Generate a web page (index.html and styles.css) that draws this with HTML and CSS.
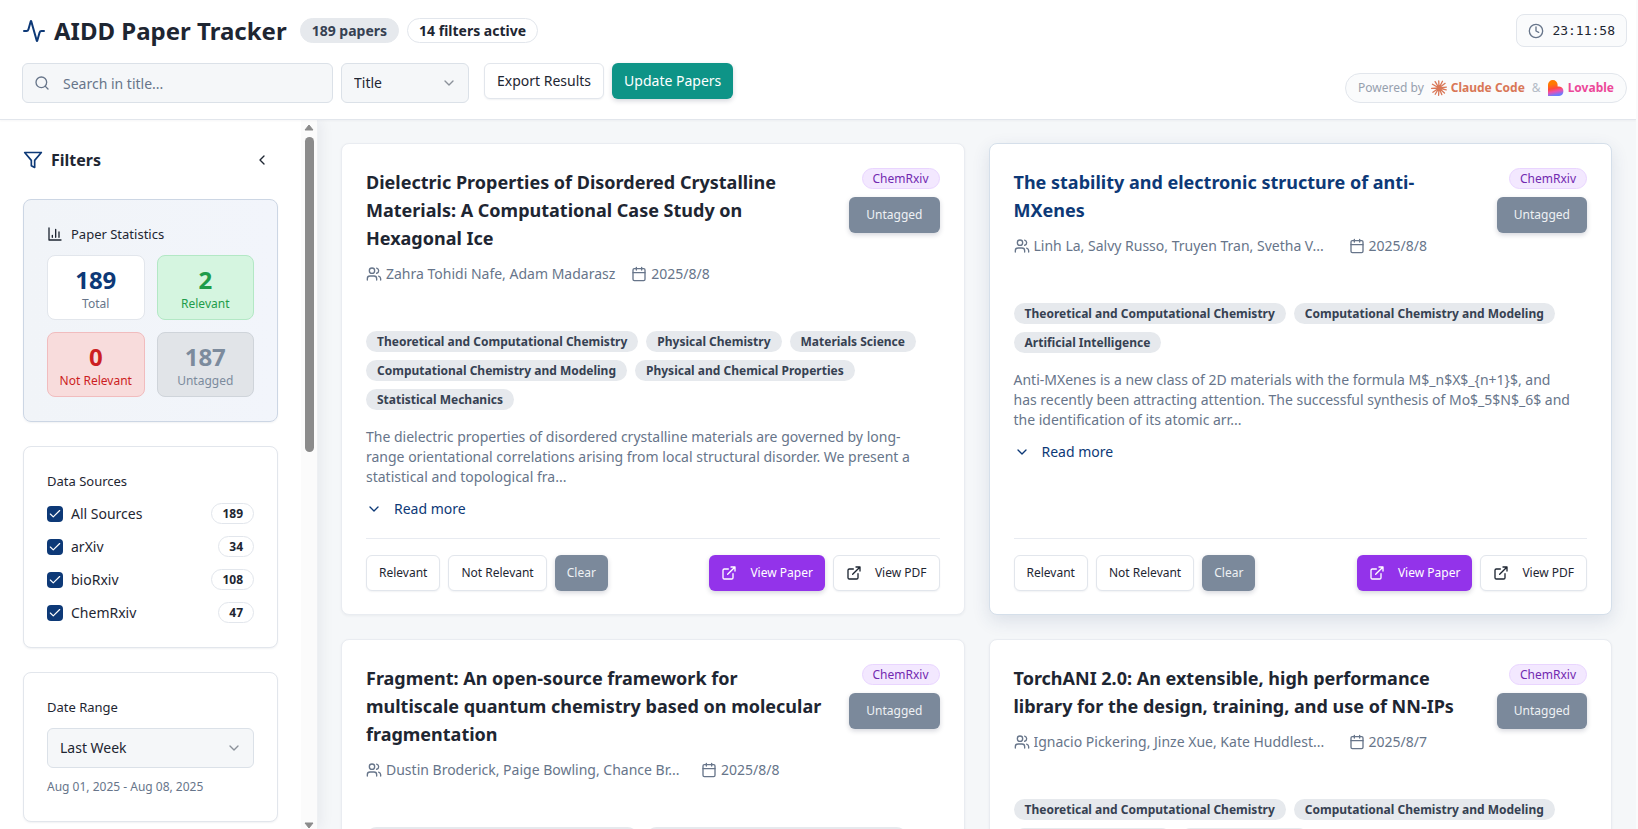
FILE: index.html
```html
<!DOCTYPE html>
<html lang="en">
<head>
<meta charset="utf-8">
<title>AIDD Paper Tracker</title>
<link rel="stylesheet" href="styles.css">
</head>
<body>
<svg class="sprite" aria-hidden="true">
  <symbol id="i-activity" viewBox="0 0 24 24"><path d="M22 12h-2.48a2 2 0 0 0-1.93 1.46l-2.35 8.36a.25.25 0 0 1-.48 0L9.24 2.18a.25.25 0 0 0-.48 0l-2.35 8.36A2 2 0 0 1 4.49 12H2"/></symbol>
  <symbol id="i-search" viewBox="0 0 24 24"><circle cx="11" cy="11" r="8"/><path d="m21 21-4.3-4.3"/></symbol>
  <symbol id="i-clock" viewBox="0 0 24 24"><circle cx="12" cy="12" r="10"/><path d="M12 6v6l4 2"/></symbol>
  <symbol id="i-down" viewBox="0 0 24 24"><path d="m6 9 6 6 6-6"/></symbol>
  <symbol id="i-left" viewBox="0 0 24 24"><path d="m15 18-6-6 6-6"/></symbol>
  <symbol id="i-check" viewBox="0 0 24 24"><path d="M20 6 9 17l-5-5"/></symbol>
  <symbol id="i-filter" viewBox="0 0 24 24"><path d="M22 3H2l8 9.46V19l4 2v-8.54L22 3z"/></symbol>
  <symbol id="i-chart" viewBox="0 0 24 24"><path d="M3 3v18h18M18 17V9M13 17V5M8 17v-3"/></symbol>
  <symbol id="i-users" viewBox="0 0 24 24"><path d="M16 21v-2a4 4 0 0 0-4-4H6a4 4 0 0 0-4 4v2"/><circle cx="9" cy="7" r="4"/><path d="M22 21v-2a4 4 0 0 0-3-3.87M16 3.13a4 4 0 0 1 0 7.75"/></symbol>
  <symbol id="i-calendar" viewBox="0 0 24 24"><rect x="3" y="4" width="18" height="18" rx="2"/><path d="M8 2v4M16 2v4M3 10h18"/></symbol>
  <symbol id="i-external" viewBox="0 0 24 24"><path d="M15 3h6v6M10 14 21 3M18 13v6a2 2 0 0 1-2 2H5a2 2 0 0 1-2-2V8a2 2 0 0 1 2-2h6"/></symbol>
</svg>
<div class="app">
  <header class="header">
    <div class="header-row">
      <div class="brand">
        <svg class="icon icon-lg primary"><use href="#i-activity"/></svg>
        <h1>AIDD Paper Tracker</h1>
        <span class="count count-solid">189 papers</span>
        <span class="count">14 filters active</span>
      </div>
      <div class="clock"><svg class="icon"><use href="#i-clock"/></svg><time>23:11:58</time></div>
    </div>
    <div class="header-row tools">
      <div class="search">
        <svg class="icon"><use href="#i-search"/></svg>
        <input type="text" placeholder="Search in title..." aria-label="Search in title">
      </div>
      <div class="select search-field">
        <select aria-label="Search field"><option>Title</option></select>
        <svg class="icon"><use href="#i-down"/></svg>
      </div>
      <div class="actions">
        <button class="btn btn-md">Export Results</button>
        <button class="btn btn-md btn-teal">Update Papers</button>
      </div>
      <div class="powered">
        <span>Powered by</span>
        <a class="claude" href="#"><svg viewBox="0 0 24 24"><g stroke="#d97757" stroke-width="2" stroke-linecap="round"><path d="M12 12 11.600 1.200M12 12 17.200 1.900M12 12 21.200 5M12 12 23 10.600M12 12 22.800 14.800M12 12 20.200 19.400M12 12 16.300 22M12 12 11.400 22.900M12 12 6.300 21.400M12 12 2.800 18.300M12 12 1 12.600M12 12 2.200 6.400M12 12 6.200 2.500"/></g></svg>Claude Code</a>
        <span class="amp">&amp;</span>
        <a class="lovable" href="#"><svg viewBox="0 0 24 24"><defs><linearGradient id="lv" x1="8" y1="2" x2="13" y2="25" gradientUnits="userSpaceOnUse"><stop offset="0.150" stop-color="#ff7a00"/><stop offset="0.450" stop-color="#ff4a3a"/><stop offset="0.650" stop-color="#ee4fae"/><stop offset="0.900" stop-color="#6a7bff"/></linearGradient></defs><path fill="url(#lv)" d="M7.200 0a7.200 7.200 0 0 1 7.200 7.200v2.700h2.400a7.100 7.100 0 0 1 0 14.100H0V7.200A7.200 7.200 0 0 1 7.200 0z"/></svg>Lovable</a>
      </div>
    </div>
  </header>

  <div class="body">
    <aside class="sidebar">
      <div class="sidebar-content">
        <div class="sidebar-head">
          <svg class="icon icon-filter primary"><use href="#i-filter"/></svg>
          <h2>Filters</h2>
          <button class="collapse" aria-label="Collapse filters"><svg class="icon"><use href="#i-left"/></svg></button>
        </div>
        <section class="panel panel-stats">
          <h3><svg class="icon"><use href="#i-chart"/></svg>Paper Statistics</h3>
          <div class="stats">
            <div class="stat total"><strong>189</strong><span>Total</span></div>
            <div class="stat yes"><strong>2</strong><span>Relevant</span></div>
            <div class="stat no"><strong>0</strong><span>Not Relevant</span></div>
            <div class="stat none"><strong>187</strong><span>Untagged</span></div>
          </div>
        </section>
        <section class="panel">
          <h3>Data Sources</h3>
          <div class="sources">
            <div class="source"><span class="box"><input type="checkbox" id="s-all" checked><svg class="icon"><use href="#i-check"/></svg></span><label for="s-all">All Sources</label><span class="num">189</span></div>
            <div class="source"><span class="box"><input type="checkbox" id="s-arxiv" checked><svg class="icon"><use href="#i-check"/></svg></span><label for="s-arxiv">arXiv</label><span class="num">34</span></div>
            <div class="source"><span class="box"><input type="checkbox" id="s-bio" checked><svg class="icon"><use href="#i-check"/></svg></span><label for="s-bio">bioRxiv</label><span class="num">108</span></div>
            <div class="source"><span class="box"><input type="checkbox" id="s-chem" checked><svg class="icon"><use href="#i-check"/></svg></span><label for="s-chem">ChemRxiv</label><span class="num">47</span></div>
          </div>
        </section>
        <section class="panel">
          <h3><label for="range">Date Range</label></h3>
          <div class="select">
            <select id="range"><option>Last Week</option></select>
            <svg class="icon"><use href="#i-down"/></svg>
          </div>
          <p class="range-note">Aug 01, 2025 - Aug 08, 2025</p>
        </section>
      </div>
      <div class="scrollbar" aria-hidden="true">
        <svg class="arrow" viewBox="0 0 10 7"><path d="M5 1 9 6H1z"/></svg>
        <div class="track"><div class="thumb"></div></div>
        <svg class="arrow" viewBox="0 0 10 7"><path d="M5 6 1 1h8z"/></svg>
      </div>
    </aside>

    <main class="papers">
      <article class="card">
        <div class="card-head">
          <div class="card-info">
            <h2>Dielectric Properties of Disordered Crystalline Materials: A Computational Case Study on Hexagonal Ice</h2>
            <div class="meta">
              <svg class="icon"><use href="#i-users"/></svg><span>Zahra Tohidi Nafe, Adam Madarasz</span>
              <svg class="icon date-icon"><use href="#i-calendar"/></svg><time>2025/8/8</time>
            </div>
          </div>
          <div class="card-status"><span class="origin">ChemRxiv</span><button class="btn btn-gray btn-tag">Untagged</button></div>
        </div>
        <div class="tags"><span>Theoretical and Computational Chemistry</span><span>Physical Chemistry</span><span>Materials Science</span><span>Computational Chemistry and Modeling</span><span>Physical and Chemical Properties</span><span>Statistical Mechanics</span></div>
        <p class="abstract">The dielectric properties of disordered crystalline materials are governed by long-range orientational correlations arising from local structural disorder. We present a statistical and topological fra...</p>
        <button class="more"><svg class="icon"><use href="#i-down"/></svg>Read more</button>
        <div class="card-foot">
          <button class="btn">Relevant</button><button class="btn">Not Relevant</button><button class="btn btn-gray">Clear</button>
          <a class="btn btn-link btn-purple" href="#"><svg class="icon"><use href="#i-external"/></svg>View Paper</a>
          <a class="btn btn-link" href="#"><svg class="icon"><use href="#i-external"/></svg>View PDF</a>
        </div>
      </article>

      <article class="card card-active">
        <div class="card-head">
          <div class="card-info">
            <h2>The stability and electronic structure of anti-MXenes</h2>
            <div class="meta">
              <svg class="icon"><use href="#i-users"/></svg><span class="long">Linh La, Salvy Russo, Truyen Tran, Svetha V...</span>
              <svg class="icon date-icon"><use href="#i-calendar"/></svg><time>2025/8/8</time>
            </div>
          </div>
          <div class="card-status"><span class="origin">ChemRxiv</span><button class="btn btn-gray btn-tag">Untagged</button></div>
        </div>
        <div class="tags"><span>Theoretical and Computational Chemistry</span><span>Computational Chemistry and Modeling</span><span>Artificial Intelligence</span></div>
        <p class="abstract">Anti-MXenes is a new class of 2D materials with the formula M$_n$X$_{n+1}$, and has recently been attracting attention. The successful synthesis of Mo$_5$N$_6$ and the identification of its atomic arr...</p>
        <button class="more"><svg class="icon"><use href="#i-down"/></svg>Read more</button>
        <div class="card-foot">
          <button class="btn">Relevant</button><button class="btn">Not Relevant</button><button class="btn btn-gray">Clear</button>
          <a class="btn btn-link btn-purple" href="#"><svg class="icon"><use href="#i-external"/></svg>View Paper</a>
          <a class="btn btn-link" href="#"><svg class="icon"><use href="#i-external"/></svg>View PDF</a>
        </div>
      </article>

      <article class="card">
        <div class="card-head">
          <div class="card-info">
            <h2>Fragment: An open-source framework for multiscale quantum chemistry based on molecular fragmentation</h2>
            <div class="meta">
              <svg class="icon"><use href="#i-users"/></svg><span class="long">Dustin Broderick, Paige Bowling, Chance Br...</span>
              <svg class="icon date-icon"><use href="#i-calendar"/></svg><time>2025/8/8</time>
            </div>
          </div>
          <div class="card-status"><span class="origin">ChemRxiv</span><button class="btn btn-gray btn-tag">Untagged</button></div>
        </div>
        <div class="tags"><span>Theoretical and Computational Chemistry</span><span>Computational Chemistry and Modeling</span></div>
      </article>

      <article class="card">
        <div class="card-head">
          <div class="card-info">
            <h2>TorchANI 2.0: An extensible, high performance library for the design, training, and use of NN-IPs</h2>
            <div class="meta">
              <svg class="icon"><use href="#i-users"/></svg><span class="long">Ignacio Pickering, Jinze Xue, Kate Huddlest...</span>
              <svg class="icon date-icon"><use href="#i-calendar"/></svg><time>2025/8/7</time>
            </div>
          </div>
          <div class="card-status"><span class="origin">ChemRxiv</span><button class="btn btn-gray btn-tag">Untagged</button></div>
        </div>
        <div class="tags"><span>Theoretical and Computational Chemistry</span><span>Computational Chemistry and Modeling</span><span>Computational Physics</span><span>Machine Learning</span></div>
      </article>
    </main>
  </div>
</div>
</body>
</html>
```
FILE: styles.css
```css
:root {
  --primary: #0d3977;
  --text: #1e2632;
  --muted: #67758a;
  --border: #e2e6ec;
  --field: #f5f7f9;
  --gray: #7b899b;
}
* { box-sizing: border-box; }
body {
  margin: 0;
  background: #fafbfc;
  color: var(--text);
  font: 14px/20px "Noto Sans", "Open Sans", sans-serif;
}
h1, h2, h3, p { margin: 0; }
button, input, select { font: inherit; color: inherit; }
a { text-decoration: none; color: inherit; }
.sprite { display: none; }
.icon {
  width: 16px;
  height: 16px;
  flex: none;
  fill: none;
  stroke: currentColor;
  stroke-width: 2;
  stroke-linecap: round;
  stroke-linejoin: round;
}
.icon-lg { width: 24px; height: 24px; }
.primary { color: var(--primary); }

.app {
  display: flex;
  flex-direction: column;
  height: 100vh;
  margin-right: 2px;
  overflow: hidden;
}

/* Header */
.header {
  position: relative;
  z-index: 2;
  display: flex;
  flex-direction: column;
  gap: 16px;
  padding: 14px 9px 16px 22px;
  background: #fff;
  border-bottom: 1px solid var(--border);
  box-shadow: 0 1px 2px rgba(20, 30, 60, .04);
}
.header-row { display: flex; justify-content: space-between; align-items: center; }
.brand { display: flex; align-items: center; gap: 8px; }
.brand h1 { margin-right: 5px; font-size: 24px; line-height: 32px; font-weight: 700; }
.count {
  height: 25px;
  padding: 0 11px;
  border: 1px solid var(--border);
  border-radius: 13px;
  font-weight: 700;
  line-height: 23px;
}
.count-solid { background: #e6e9ed; border-color: #e6e9ed; color: #364152; }
.clock {
  display: flex;
  align-items: center;
  gap: 8px;
  height: 33px;
  padding: 0 11px;
  border: 1px solid var(--border);
  border-radius: 8px;
  background: #fafbfc;
  font: 13px/20px "DejaVu Sans Mono", monospace;
}
.clock .icon { color: var(--muted); }
.tools { justify-content: flex-start; align-items: flex-start; }
.search { position: relative; width: 311px; margin-right: 8px; }
.search .icon { position: absolute; left: 12px; top: 12px; color: var(--muted); }
.search input {
  width: 100%;
  height: 40px;
  padding: 0 12px 0 40px;
  border: 1px solid #dbe1e8;
  border-radius: 6px;
  background: var(--field);
}
.search input::placeholder { color: var(--muted); opacity: 1; }
.select { position: relative; }
.select select {
  display: block;
  width: 100%;
  height: 40px;
  padding: 0 36px 0 12px;
  appearance: none;
  border: 1px solid #dbe1e8;
  border-radius: 6px;
  background: var(--field);
}
.select .icon { position: absolute; right: 12px; top: 12px; color: #8b919a; pointer-events: none; }
.search-field { width: 128px; }
.actions { display: flex; gap: 8px; margin-left: 15px; }
.powered {
  display: flex;
  align-items: center;
  align-self: flex-end;
  gap: 7px;
  height: 30px;
  margin-left: auto;
  padding: 0 12px;
  border: 1px solid var(--border);
  border-radius: 15px;
  background: #fafbfc;
  color: #96a0ae;
  font-size: 12px;
  line-height: 16px;
}
.powered a { display: flex; align-items: center; gap: 4px; font-weight: 700; }
.powered svg { width: 16px; height: 16px; }
.claude { color: #d97757; }
.lovable { color: #ec4899; }
.amp { color: #b4bcc7; }

/* Buttons */
.btn {
  display: inline-flex;
  align-items: center;
  justify-content: center;
  height: 36px;
  padding: 0 12px;
  border: 1px solid var(--border);
  border-radius: 6px;
  background: #fff;
  box-shadow: 0 1px 2px rgba(20, 30, 60, .06);
  font-size: 12px;
  line-height: 16px;
  white-space: nowrap;
}
.btn-md { font-size: 14px; }
.btn-teal, .btn-gray, .btn-purple {
  border: 0;
  color: #fff;
  box-shadow: 0 2px 5px rgba(20, 30, 60, .18);
}
.btn-teal { background-color: #0e9487; }
.btn-gray { background-color: var(--gray); color: #eef1f4; }
.btn-purple { background-color: #9333ea; }
.btn-tag { padding: 0 17px; }
.btn-link { gap: 13px; }

/* Sidebar */
.body { display: flex; flex: 1; min-height: 0; }
.sidebar {
  position: relative;
  z-index: 1;
  display: flex;
  flex: none;
  width: 318px;
  background: #fff;
  border-right: 1px solid #eef0f3;
  box-shadow: 2px 0 14px rgba(20, 30, 60, .07);
}
.sidebar-content {
  display: flex;
  flex: 1;
  flex-direction: column;
  gap: 24px;
  padding: 24px 23px 0;
  overflow: hidden;
}
.sidebar-head { display: flex; align-items: center; gap: 8px; height: 31px; }
.sidebar-head h2 { font-size: 16px; line-height: 24px; font-weight: 700; }
.icon-filter { width: 20px; height: 20px; }
.collapse {
  display: flex;
  margin-left: auto;
  padding: 8px;
  border: 0;
  background: none;
}
.panel {
  padding: 24px 23px;
  border: 1px solid var(--border);
  border-radius: 8px;
  background: #fff;
  box-shadow: 0 1px 2px rgba(20, 30, 60, .06);
}
.panel-stats { background: linear-gradient(90deg, #f1f4f8, #f2f5fb); border-color: #ccd6e4; }
.panel h3 {
  display: flex;
  align-items: center;
  gap: 8px;
  margin-bottom: 11px;
  font-size: 13px;
  font-weight: 400;
}
.stats { display: grid; grid-template-columns: 1fr 1fr; gap: 12px; }
.stat {
  display: flex;
  flex-direction: column;
  height: 65px;
  padding-top: 8px;
  border: 1px solid;
  border-radius: 8px;
  text-align: center;
}
.stat strong { font-size: 24px; line-height: 32px; }
.stat span { font-size: 12px; line-height: 16px; white-space: nowrap; }
.total { background: #fff; border-color: var(--border); color: var(--primary); }
.total span { color: var(--muted); }
.yes { background: #d5f5e0; border-color: #b3e8c5; color: #1f9c4a; }
.no { background: #f8dcdc; border-color: #f1bcbe; color: #cc1e22; }
.none { background: #e1e4e8; border-color: #cfd4da; color: #7c8b9d; }
.sources { display: flex; flex-direction: column; gap: 12px; padding-top: 1px; }
.source { display: flex; align-items: center; gap: 8px; height: 21px; }
.box { position: relative; width: 16px; height: 16px; }
.box input {
  display: block;
  width: 16px;
  height: 16px;
  margin: 0;
  appearance: none;
  border-radius: 4px;
  background: var(--primary);
}
.box .icon { position: absolute; left: 1px; top: 1px; width: 14px; height: 14px; color: #fff; pointer-events: none; }
.num {
  margin-left: auto;
  padding: 0 10px;
  border: 1px solid var(--border);
  border-radius: 11px;
  font-size: 12px;
  line-height: 19px;
  font-weight: 700;
}
.range-note { margin-top: 9px; color: var(--muted); font-size: 12px; }
.scrollbar {
  display: flex;
  flex-direction: column;
  align-items: center;
  flex: none;
  width: 16px;
  padding-top: 4px;
  background: #fbfbfb;
}
.arrow { width: 10px; height: 7px; flex: none; fill: #8b8b8b; stroke: #8b8b8b; stroke-linejoin: round; }
.track { flex: 1; padding-top: 6px; }
.thumb { width: 9px; height: 46%; border-radius: 5px; background: #8b8b8b; }

/* Paper cards */
.papers {
  display: grid;
  flex: 1;
  grid-template-columns: 1fr 1fr;
  grid-auto-rows: max-content;
  gap: 24px;
  padding: 23px 24px 23px 23px;
  overflow: hidden;
  background: var(--field);
}
.card {
  display: flex;
  flex-direction: column;
  min-width: 0;
  padding: 24px 24px 23px;
  border: 1px solid #e9ecf1;
  border-radius: 8px;
  background: #fff;
  box-shadow: 0 1px 3px rgba(20, 30, 60, .05);
}
.card-active { border-color: #d5dfea; box-shadow: 0 6px 18px rgba(30, 60, 110, .12); }
.card-active h2 { color: var(--primary); }
.card-head { display: flex; gap: 16px; margin-bottom: 47px; }
.card-info { flex: 1; min-width: 0; }
.card h2 { margin-bottom: 12px; font-size: 18px; line-height: 28px; font-weight: 700; }
.meta { display: flex; align-items: center; gap: 4px; height: 20px; color: var(--muted); white-space: nowrap; }
.long { width: 299px; overflow: hidden; }
.date-icon { margin-left: 12px; }
.card-status { display: flex; flex-direction: column; align-items: flex-end; gap: 8px; height: 65px; }
.origin {
  padding: 0 10px;
  border: 1px solid #e9d5ff;
  border-radius: 11px;
  background: #f3e8ff;
  color: #7229b0;
  font-size: 12px;
  line-height: 19px;
}
.tags { display: flex; flex-wrap: wrap; gap: 8px; margin-bottom: 17px; }
.tags span {
  padding: 0 11px;
  border-radius: 11px;
  background: #e6e9ed;
  color: #364152;
  font-size: 12px;
  line-height: 21px;
  font-weight: 700;
}
.abstract { padding-right: 12px; color: var(--muted); }
.more {
  display: flex;
  align-items: center;
  align-self: flex-start;
  gap: 12px;
  height: 36px;
  margin: 4px 0 11px;
  padding: 0;
  border: 0;
  background: none;
  color: var(--primary);
}
.card-foot {
  display: flex;
  gap: 8px;
  margin-top: auto;
  padding-top: 16px;
  border-top: 1px solid #e8ebf1;
}
.btn-purple { margin-left: auto; }
```
